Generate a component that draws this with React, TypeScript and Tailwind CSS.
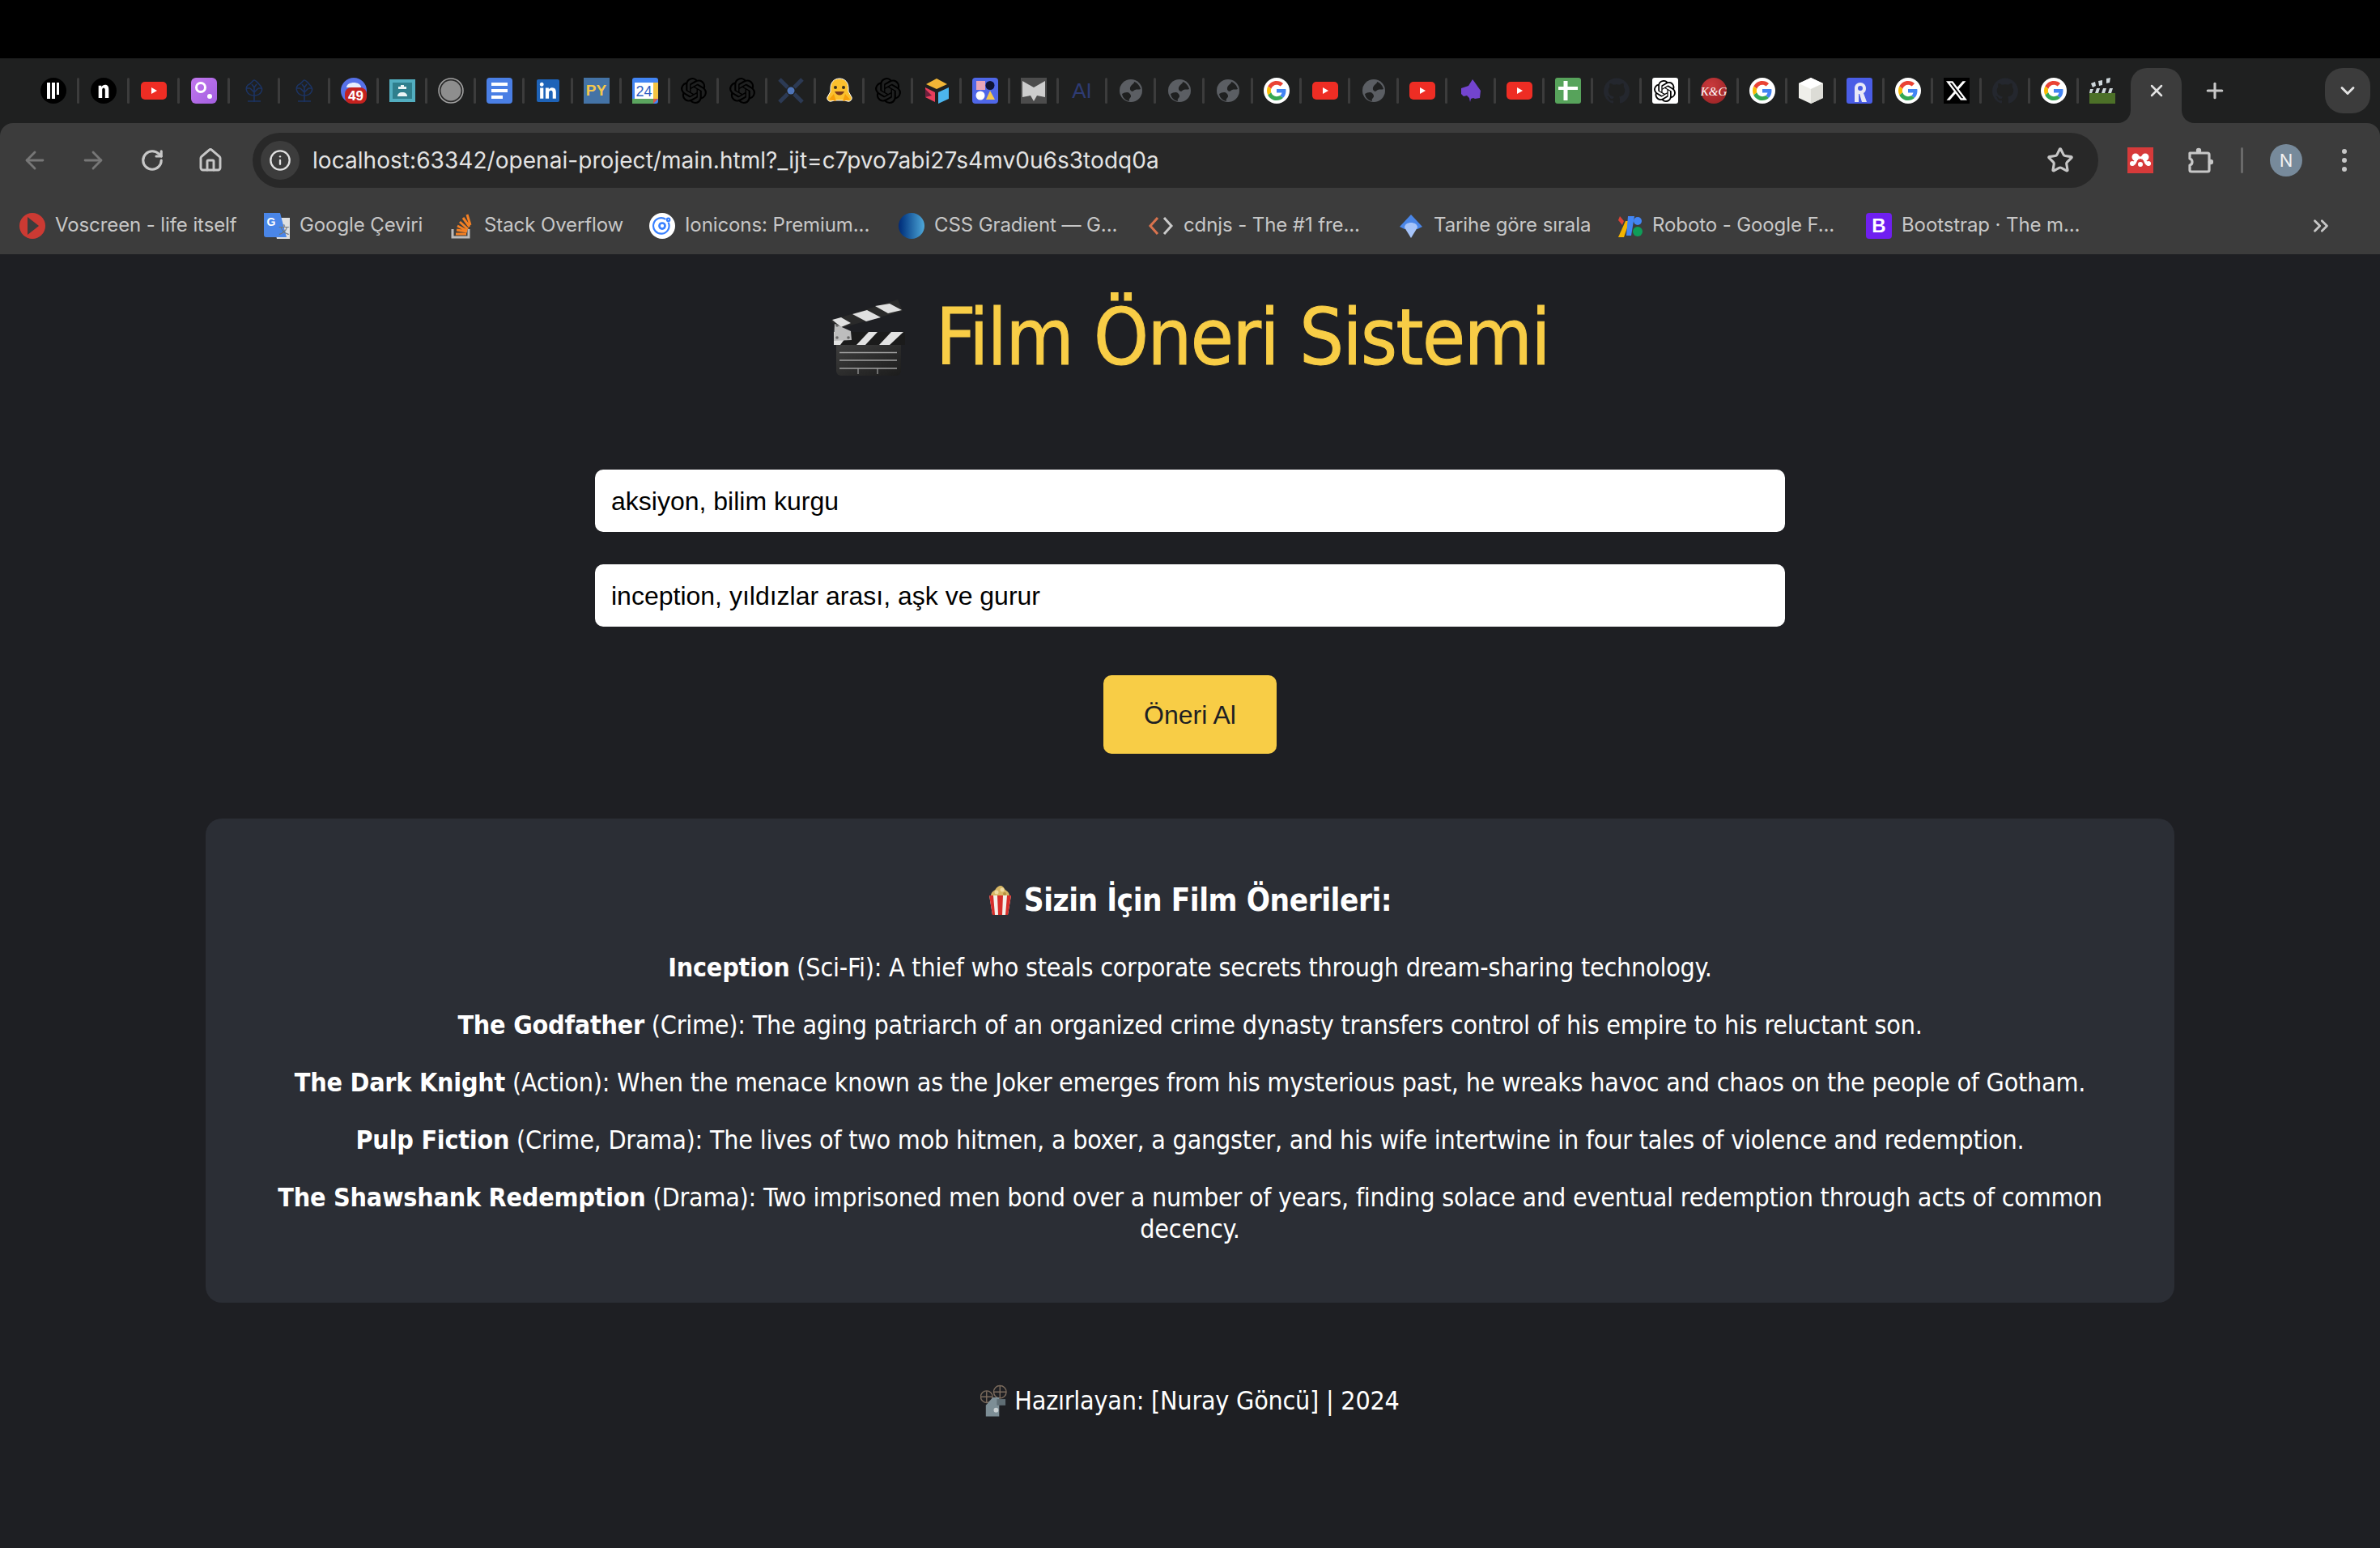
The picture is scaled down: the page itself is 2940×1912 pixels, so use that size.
import type { ReactNode } from 'react'
import { ArrowLeft, ArrowRight, RotateCw, House, Info, Star, X, Plus, ChevronDown, ChevronsRight } from 'lucide-react'
import { SiOpenai, SiGithub, SiLinkedin, SiX } from 'react-icons/si'

const sys = '"Liberation Sans", Arial, sans-serif'

function GoogleG({ size = 20 }: { size?: number }) {
  return (
    <svg viewBox="0 0 48 48" width={size} height={size}>
      <path fill="#EA4335" d="M24 9.5c3.54 0 6.71 1.22 9.21 3.6l6.85-6.85C35.9 2.38 30.47 0 24 0 14.62 0 6.51 5.38 2.56 13.22l7.98 6.19C12.43 13.72 17.74 9.5 24 9.5z" />
      <path fill="#4285F4" d="M46.98 24.55c0-1.57-.15-3.09-.38-4.55H24v9.02h12.94c-.58 2.96-2.26 5.48-4.78 7.18l7.73 6c4.51-4.18 7.09-10.36 7.09-17.65z" />
      <path fill="#FBBC05" d="M10.53 28.59c-.48-1.45-.76-2.99-.76-4.59s.27-3.14.76-4.59l-7.98-6.19C.92 16.46 0 20.12 0 24c0 3.88.92 7.54 2.56 10.78l7.97-6.19z" />
      <path fill="#34A853" d="M24 48c6.48 0 11.93-2.13 15.89-5.81l-7.73-6c-2.15 1.45-4.92 2.3-8.16 2.3-6.26 0-11.57-4.22-13.47-9.91l-7.98 6.19C6.51 42.62 14.62 48 24 48z" />
    </svg>
  )
}

const G = () => (
  <div className="w-8 h-8 rounded-full bg-white flex items-center justify-center">
    <GoogleG size={24} />
  </div>
)

const Yt = () => (
  <svg viewBox="0 0 32 32" width="32" height="32">
    <rect x="0" y="5" width="32" height="22" rx="5" fill="#ee2d24" />
    <path d="M13 12l7 4-7 4z" fill="#fff" />
  </svg>
)

const Globe = () => (
  <svg viewBox="0 0 32 32" width="32" height="32">
    <circle cx="16" cy="16" r="14" fill="#5b5e63" />
    <path d="M5 20c3-2 7-3 9-1s3 4 1 6-1 3-1 4c-5-1-8-4-9-9z" fill="#1f2020" />
    <path d="M20 5c4 1 7 5 8 9-2 1-5 0-7 1s-3 3-5 1-1-5 1-7 3-2 3-4z" fill="#1f2020" />
  </svg>
)

const Tree = () => (
  <svg viewBox="0 0 32 32" width="32" height="32" fill="none" stroke="#1c3362" strokeWidth="1.6">
    <path d="M16 30V12M8 29h16M16 22c-3 0-7-1-9-5s0-8 3-9 4-5 6-5 4 3 6 5 5 5 3 9-6 5-9 5z" />
    <path d="M16 18l-5-5M16 18l5-5M16 12l-3-4M16 12l3-4M7 13h4M25 13h-4" />
  </svg>
)

const Clapboard = () => (
  <svg viewBox="0 0 32 32" width="32" height="32">
    <rect x="0" y="19" width="32" height="13" fill="#4c7028" />
    <rect x="0" y="13" width="32" height="6" fill="#1f2020" />
    <path d="M1 14h4l-2 5H0zM9 13h4l-2 6H7zM17 13h4l-2 6h-4zM25 13h4l-2 6h-4z" fill="#cfd8dc" />
    <path d="M2 7l5-2 1 5-4 2zM11 4l5-1 0 6-4 1zM21 1l5-1-1 6-4 1z" fill="#cfd8dc" />
  </svg>
)

const favicons: ReactNode[] = [
  <div className="w-8 h-8 rounded-full bg-black flex items-center justify-center gap-[2px]">
    <div className="w-[4px] h-[20px] bg-white" />
    <div className="w-[4px] h-[20px] bg-white" />
    <div className="w-[3px] h-[15px] bg-white self-start mt-[6px]" />
  </div>,
  <div className="w-8 h-8 rounded-full bg-black flex items-center justify-center">
    <svg viewBox="0 0 20 24" width="18" height="22"><path d="M3 22V5h4v2c1-2 3-3 5-3 4 0 5 3 5 6v12h-5V11c0-2-1-3-2-3s-2 1-2 3v11z" fill="#fff" /></svg>
  </div>,
  <Yt />,
  <svg viewBox="0 0 32 32" width="32" height="32">
    <defs><linearGradient id="pu" x1="0" y1="0" x2="1" y2="1"><stop offset="0" stopColor="#c177ee" /><stop offset="1" stopColor="#a45fe0" /></linearGradient></defs>
    <rect width="32" height="32" rx="6" fill="url(#pu)" />
    <circle cx="12" cy="12" r="5.500" fill="none" stroke="#fff" strokeWidth="3" />
    <circle cx="23" cy="23" r="3" fill="#fff" />
  </svg>,
  <Tree />,
  <Tree />,
  <svg viewBox="0 0 32 32" width="32" height="32">
    <circle cx="16" cy="16" r="16" fill="#5671e8" />
    <path d="M7 12c0-4 5-6 9-6s9 2 9 6z" fill="#e8edfc" />
    <rect x="5" y="12" width="27" height="20" rx="8" fill="#c5221f" />
    <text x="18.500" y="28" textAnchor="middle" fontSize="17" fontWeight="700" fill="#fff" fontFamily={sys}>49</text>
  </svg>,
  <svg viewBox="0 0 32 32" width="32" height="32">
    <rect y="2" width="32" height="28" fill="#52aec0" />
    <rect x="4" y="6" width="24" height="20" fill="#2f7f8d" />
    <path d="M14 9h4v2h3v3h-10v-3h3z" fill="#eaf4f5" />
    <path d="M10 23c0-3 2-5 6-5s6 2 6 5z" fill="#eaf4f5" />
  </svg>,
  <svg viewBox="0 0 32 32" width="32" height="32">
    <circle cx="16" cy="16" r="15" fill="#2a2a2a" stroke="#a3a3a3" strokeWidth="1.500" />
    <circle cx="16" cy="16" r="12.500" fill="#8e8e8e" />
  </svg>,
  <svg viewBox="0 0 32 32" width="32" height="32">
    <rect width="32" height="32" rx="4" fill="#4a7fe5" />
    <rect x="6" y="6" width="20" height="4" fill="#fff" />
    <rect x="6" y="14" width="20" height="4" fill="#fff" />
    <rect x="6" y="22" width="14" height="4" fill="#fff" />
  </svg>,
  <div className="w-8 h-8 flex items-center justify-center text-[#1e63b8] relative">
    <div className="absolute inset-[4px] bg-white" />
    <SiLinkedin size={28} className="relative" />
  </div>,
  <div className="w-8 h-8 bg-[#4473a6] flex items-center justify-center text-[#f4c84b] text-[19px] font-bold" style={{ fontFamily: sys }}>PY</div>,
  <svg viewBox="0 0 32 32" width="32" height="32">
    <rect width="32" height="32" rx="3" fill="#4285f4" />
    <rect x="3" y="6" width="23" height="20" fill="#fff" />
    <rect x="26" y="6" width="6" height="20" fill="#f4c542" />
    <rect y="26" width="26" height="6" fill="#5ba55f" />
    <path d="M26 32v-6h6z" fill="#d9584a" />
    <text x="14.500" y="23" textAnchor="middle" fontSize="18" fill="#2f5fc4" fontFamily={sys}>24</text>
  </svg>,
  <SiOpenai size={32} className="text-black" />,
  <SiOpenai size={32} className="text-black" />,
  <svg viewBox="0 0 32 32" width="32" height="32">
    <path d="M2 2l10 10M30 2L20 12M2 30l10-10M30 30L20 20" stroke="#2c3a54" strokeWidth="5" />
    <circle cx="16" cy="16" r="4.500" fill="#4e74b8" />
  </svg>,
  <svg viewBox="0 0 32 32" width="32" height="32">
    <path d="M16 1c7 0 11 5 11 12v4l4 7c1 3-2 6-5 5l-4-1H10l-4 1c-3 1-6-2-5-5l4-7v-4C5 6 9 1 16 1z" fill="#fbc02d" stroke="#fff" strokeWidth="1" />
    <circle cx="11" cy="12" r="2" fill="#3a2f1a" />
    <circle cx="21" cy="12" r="2" fill="#3a2f1a" />
    <path d="M10 17c3 6 9 6 12 0z" fill="#7a3b1d" />
    <path d="M3 27l6-7 3 9zM29 27l-6-7-3 9z" fill="#f59e0b" />
  </svg>,
  <SiOpenai size={32} className="text-black" />,
  <svg viewBox="0 0 32 32" width="32" height="32">
    <path d="M16 1l13 7-13 6-13-6z" fill="#f2b636" />
    <path d="M2 12l12 6v12L2 24z" fill="#e83e5c" />
    <path d="M2 14l8 8-8 2z" fill="#6d1f3c" />
    <path d="M18 18l13-6v14l-13 6z" fill="#4cb5ee" />
  </svg>,
  <svg viewBox="0 0 32 32" width="32" height="32">
    <rect width="32" height="32" rx="4" fill="#4f67e8" />
    <rect x="5" y="4" width="11" height="11" fill="#e8a6b9" />
    <circle cx="22" cy="9.500" r="5.500" fill="#0f1333" />
    <circle cx="10" cy="22" r="5.500" fill="#fff" />
    <path d="M22 16l6 11H17z" fill="#f5c84b" />
  </svg>,
  <svg viewBox="0 0 32 32" width="32" height="32">
    <rect width="32" height="32" fill="#4c4c4c" />
    <path d="M2 4l14 8 14-8v20l-10-2-4 7-4-7-10 2z" fill="#cdcdcd" />
  </svg>,
  <div className="w-8 h-8 flex items-center justify-center text-[#2e3b73] text-[26px]" style={{ fontFamily: sys }}>AI</div>,
  <Globe />,
  <Globe />,
  <Globe />,
  <G />,
  <Yt />,
  <Globe />,
  <Yt />,
  <svg viewBox="0 0 32 32" width="32" height="32">
    <path d="M4 13l9-3 5-8 3 4 7 10-1 9-6 1-2-1-3 1-1 4-1-5-3-3-4 1-3-3z" fill="#7344cf" />
  </svg>,
  <Yt />,
  <svg viewBox="0 0 32 32" width="32" height="32">
    <rect width="32" height="32" rx="3" fill="#57a35b" />
    <rect x="10.500" y="4" width="5" height="24" fill="#fff" />
    <rect x="4" y="11" width="24" height="4" fill="#fff" />
  </svg>,
  <SiGithub size={32} className="text-[#24272e]" />,
  <div className="w-8 h-8 rounded-[3px] bg-white flex items-center justify-center">
    <SiOpenai size={27} className="text-black" />
  </div>,
  <svg viewBox="0 0 32 32" width="32" height="32">
    <defs><radialGradient id="kg" cx="0.400" cy="0.300" r="0.800"><stop offset="0" stopColor="#c9393c" /><stop offset="1" stopColor="#9c2426" /></radialGradient></defs>
    <circle cx="16" cy="16" r="16" fill="url(#kg)" />
    <text x="16" y="22" textAnchor="middle" fontSize="15" fontStyle="italic" fill="#fff" fontFamily='"Liberation Serif", serif'>K&amp;G</text>
  </svg>,
  <G />,
  <svg viewBox="0 0 32 32" width="32" height="32">
    <path d="M16 0l15 7v18l-15 7-15-7V7z" fill="#efefea" />
    <path d="M16 14l15-7-15-7L1 7z" fill="#fff" />
    <path d="M31 7v18l-15 7V14z" fill="#dcdcd6" />
  </svg>,
  <svg viewBox="0 0 32 32" width="32" height="32">
    <rect width="32" height="32" rx="3" fill="#4a5de6" />
    <path d="M10 30V13c0-4 3-7 7-7s7 3 7 7c0 3-1 5-3 6l4 11h-6l-3-10h-1v10z" fill="#e8e9f7" />
    <circle cx="17" cy="13" r="3" fill="#4a5de6" />
  </svg>,
  <G />,
  <div className="w-8 h-8 bg-black flex items-center justify-center text-white">
    <SiX size={26} />
  </div>,
  <SiGithub size={32} className="text-[#24272e]" />,
  <G />,
  <Clapboard />,
]

const bookmarks: { icon: ReactNode; label: string; width: string }[] = [
  {
    label: 'Voscreen - life itself',
    width: 'w-[302px]',
    icon: (
      <svg viewBox="0 0 32 32" width="32" height="32">
        <circle cx="16" cy="16" r="16" fill="#cc3a33" />
        <path d="M10 5l14 11-14 11z" fill="#3c3c3c" />
      </svg>
    ),
  },
  {
    label: 'Google Çeviri',
    width: 'w-[228px]',
    icon: (
      <svg viewBox="0 0 32 32" width="32" height="32">
        <path d="M10 6h22v26H16z" fill="#e0e0e0" />
        <path d="M0 0h20l8 30H3a3 3 0 0 1-3-3z" fill="#4a86e8" />
        <text x="9" y="16" textAnchor="middle" fontSize="14" fontWeight="700" fill="#fff" fontFamily={sys}>G</text>
        <text x="25" y="25" textAnchor="middle" fontSize="13" fill="#777" fontFamily='"Noto Sans CJK SC", sans-serif'>文</text>
      </svg>
    ),
  },
  {
    label: 'Stack Overflow',
    width: 'w-[248px]',
    icon: (
      <svg viewBox="0 0 32 32" width="32" height="32" fill="none" strokeWidth="3">
        <path d="M5 20v10h20V20" stroke="#bcbbbb" />
        <path d="M9 26h13M10 21l13 2M11 16l12 6M14 11l10 9M18 6l8 11M23 2l4 13" stroke="#f48024" />
      </svg>
    ),
  },
  {
    label: 'Ionicons: Premium...',
    width: 'w-[308px]',
    icon: (
      <div className="w-8 h-8 rounded-full bg-white flex items-center justify-center">
        <svg viewBox="0 0 24 24" width="26" height="26" fill="none" stroke="#3880ff" strokeWidth="2">
          <path d="M19 8a9 9 0 1 1-3-3.500" />
          <circle cx="12" cy="12" r="4.500" fill="#3880ff" stroke="none" />
          <circle cx="12" cy="12" r="2" fill="#fff" stroke="none" />
          <circle cx="19" cy="5" r="1.600" />
        </svg>
      </div>
    ),
  },
  {
    label: 'CSS Gradient — G...',
    width: 'w-[308px]',
    icon: <div className="w-8 h-8 rounded-full bg-gradient-to-r from-[#022a78] to-[#4fa8d8]" />,
  },
  {
    label: 'cdnjs - The #1 fre...',
    width: 'w-[309px]',
    icon: (
      <svg viewBox="0 0 32 32" width="32" height="32" fill="none" strokeWidth="3">
        <path d="M12 6L3 16l9 10" stroke="#d9734e" />
        <path d="M20 6l9 10-9 10" stroke="#c9c9c9" />
      </svg>
    ),
  },
  {
    label: 'Tarihe göre sırala',
    width: 'w-[270px]',
    icon: (
      <svg viewBox="0 0 32 32" width="32" height="32">
        <path d="M16 2l14 15-6 3H8l-6-3z" fill="#4a86e8" />
        <path d="M8 18c0-4 4-6 8-6s8 2 8 6l-8 13z" fill="#a6c4fa" />
      </svg>
    ),
  },
  {
    label: 'Roboto - Google F...',
    width: 'w-[308px]',
    icon: (
      <svg viewBox="0 0 32 32" width="32" height="32">
        <path d="M2 30l9-20 5 0-7 20z" fill="#f4b400" />
        <path d="M4 4l5 6-2 5-5-6z" fill="#db4437" />
        <path d="M14 4h8l-4 24h-6z" fill="#4285f4" />
        <circle cx="26" cy="10" r="5" fill="#4285f4" />
        <circle cx="26" cy="23" r="6" fill="#0f9d58" />
      </svg>
    ),
  },
  {
    label: 'Bootstrap · The m...',
    width: 'w-[270px]',
    icon: (
      <div className="w-8 h-8 rounded-[4px] bg-[#6f1ff0] flex items-center justify-center text-white text-[24px] font-bold" style={{ fontFamily: sys }}>
        B
      </div>
    ),
  },
]

const recommendations = [
  { title: 'Inception', rest: ' (Sci-Fi): A thief who steals corporate secrets through dream-sharing technology.' },
  { title: 'The Godfather', rest: ' (Crime): The aging patriarch of an organized crime dynasty transfers control of his empire to his reluctant son.' },
  { title: 'The Dark Knight', rest: ' (Action): When the menace known as the Joker emerges from his mysterious past, he wreaks havoc and chaos on the people of Gotham.' },
  { title: 'Pulp Fiction', rest: ' (Crime, Drama): The lives of two mob hitmen, a boxer, a gangster, and his wife intertwine in four tales of violence and redemption.' },
  { title: 'The Shawshank Redemption', rest: ' (Drama): Two imprisoned men bond over a number of years, finding solace and eventual redemption through acts of common decency.' },
]

function ClapperEmoji() {
  return (
    <svg viewBox="10 7 93 95" width="93" height="95">
      <defs>
        <linearGradient id="cb" x1="0" y1="0" x2="1" y2="1">
          <stop offset="0" stopColor="#3e3e3e" />
          <stop offset="1" stopColor="#1c1c1c" />
        </linearGradient>
      </defs>
      <path d="M17 62h80v33a6 6 0 0 1-6 6H23a6 6 0 0 1-6-6z" fill="url(#cb)" />
      <path d="M21 72.500h71M21 82h71M21 92h71" stroke="#a0a0a0" strokeWidth="1.500" />
      <path d="M44 92v7M68 92v7" stroke="#a0a0a0" strokeWidth="1.200" />
      <path d="M14 47h88v16H14z" fill="#1b1b1b" />
      <path d="M14 47h20l-12 16h-8zM42 63l15-16h11L53 63zM70 63l15-16h15L83 63z" fill="#e2e2e2" />
      <path d="M10 33L93 7l6 14-79 22z" fill="#2a2a2a" />
      <path d="M12 32l11-3 12 7-12 5zM37 25l18-5 17 9-18 5zM65 15l18-3 15 8-17 4z" fill="#e0e0e0" />
      <path d="M15 37l20 9 1 11-22 1z" fill="#bdbdbd" />
      <circle cx="18" cy="39" r="1.800" fill="#666" />
      <circle cx="18" cy="54" r="1.800" fill="#666" />
      <circle cx="32" cy="54" r="1.800" fill="#666" />
    </svg>
  )
}

function PopcornEmoji() {
  return (
    <svg viewBox="0 0 29 36" width="29" height="36">
      <path d="M3 13C3 7 8 6 9 4s4-4 6-4 4 2 5 4 6 3 6 9z" fill="#d8b765" />
      <circle cx="10" cy="8" r="2.500" fill="#f0dba0" />
      <circle cx="17" cy="5" r="2.500" fill="#f0dba0" />
      <circle cx="20" cy="10" r="2" fill="#b98f40" />
      <path d="M1 12h27l-4 24H5z" fill="#f4f0ea" />
      <path d="M1 12h5l2 24H5zM11 12h7l-1 24h-5zM23 12h5l-4 24h-3z" fill="#d62e2a" />
    </svg>
  )
}

function ProjectorEmoji() {
  return (
    <svg viewBox="0 0 34 40" width="33" height="40">
      <g fill="none" stroke="#7a6a5c" strokeWidth="1.500">
        <circle cx="8" cy="15" r="7.500" />
        <circle cx="25" cy="9" r="8" />
        <path d="M8 8l0 14M1 15h14M25 1v16M17 9h16" />
      </g>
      <path d="M7 40V26l9-10h8v24z" fill="#7d8e96" />
      <rect x="21" y="18" width="11" height="8" fill="#5f6d74" />
      <circle cx="20" cy="32" r="3" fill="#c9d0d3" />
    </svg>
  )
}

export default function App() {
  return (
    <div className="w-[2940px] h-[1912px] bg-[#1e1f23] flex flex-col overflow-hidden" style={{ fontFamily: '"Inter", sans-serif' }}>
      <div className="h-[72px] bg-black shrink-0" />

      {/* Tab strip */}
      <div className="h-[80px] bg-[#1f2020] flex items-center pl-[36px] pr-[12px] shrink-0">
        {favicons.map((icon, i) => (
          <div key={i} className="flex items-center">
            <div className={`${i < 6 ? 'w-[59px]' : 'w-[57px]'} flex items-center justify-center`}>{icon}</div>
            {i < favicons.length - 1 && <div className="w-[3px] h-[32px] rounded-full bg-[#3c3c3c]" />}
          </div>
        ))}
        <div className="relative self-end ml-[7px] w-[63px] h-[68px] bg-[#3c3c3c] rounded-t-[20px] flex items-center justify-center pb-[12px] text-[#e3e3e3]">
          <X size={24} strokeWidth={2.500} />
          <svg viewBox="0 0 16 16" width="16" height="16" className="absolute bottom-0 -left-[16px]">
            <path d="M16 0v16H0c9 0 16-7 16-16z" fill="#3c3c3c" />
          </svg>
          <svg viewBox="0 0 16 16" width="16" height="16" className="absolute bottom-0 -right-[16px]">
            <path d="M0 0v16h16C7 16 0 9 0 0z" fill="#3c3c3c" />
          </svg>
        </div>
        <div className="ml-[20px] w-[42px] flex justify-center text-[#c7c7c7]">
          <Plus size={30} strokeWidth={2.500} />
        </div>
        <div className="ml-auto w-[56px] h-[56px] rounded-[22px] bg-[#3c3c3c] flex items-center justify-center text-[#e3e3e3]">
          <ChevronDown size={28} strokeWidth={2.500} />
        </div>
      </div>

      {/* Toolbar */}
      <div className="bg-[#1f2020] shrink-0">
        <div className="bg-[#3c3c3c] rounded-t-[16px] h-[92px] flex items-center pl-[24px] pr-[24px]">
          <div className="w-[38px] flex justify-center text-[#777777]">
            <ArrowLeft size={34} strokeWidth={2} />
          </div>
          <div className="w-[38px] ml-[34px] flex justify-center text-[#777777]">
            <ArrowRight size={34} strokeWidth={2} />
          </div>
          <div className="w-[38px] ml-[35px] flex justify-center text-[#c7c7c7]">
            <RotateCw size={30} strokeWidth={2.500} />
          </div>
          <div className="w-[38px] ml-[34px] flex justify-center text-[#c7c7c7]">
            <House size={32} strokeWidth={2.200} />
          </div>
          <div className="ml-[33px] w-[2280px] h-[68px] rounded-full bg-[#282828] flex items-center pl-[10px] pr-[30px] shrink-0">
            <div className="w-[48px] h-[48px] rounded-full bg-[#3c3c3c] flex items-center justify-center text-[#e3e3e3]">
              <Info size={28} strokeWidth={2} />
            </div>
            <div className="ml-[16px] text-[28px] text-[#e3e3e3] tracking-[0.05px]">localhost:63342/openai-project/main.html?_ijt=c7pvo7abi27s4mv0u6s3todq0a</div>
            <Star size={34} strokeWidth={2.200} className="ml-auto text-[#c7c7c7]" />
          </div>
          <div className="ml-[36px] w-[32px] h-[32px] bg-[#d63a3a] shrink-0">
            <svg viewBox="0 0 32 32" width="32" height="32">
              <path d="M5 21c3 0 4-1 5-4s1-5 3-5 2 2 3 2 1-2 3-2 2 2 3 5 2 4 5 4" fill="none" stroke="#fff" strokeWidth="3.500" />
              <circle cx="10" cy="12" r="4.500" fill="#fff" />
              <circle cx="22" cy="12" r="4.500" fill="#fff" />
              <circle cx="6" cy="20" r="3" fill="#fff" />
              <circle cx="26" cy="20" r="3" fill="#fff" />
              <circle cx="16" cy="21" r="3" fill="#fff" />
              <circle cx="16" cy="16" r="2" fill="#d63a3a" />
            </svg>
          </div>
          <div className="ml-[42px] w-[32px] shrink-0">
            <svg viewBox="0 0 32 32" width="32" height="32">
              <path d="M3 7h22a2 2 0 0 1 2 2v19a2 2 0 0 1-2 2H5a2 2 0 0 1-2-2v-6c4-1 4-7 0-8z" fill="none" stroke="#c7c7c7" strokeWidth="3.200" strokeLinejoin="round" />
              <circle cx="14" cy="4" r="3.200" fill="#c7c7c7" />
              <circle cx="29" cy="18" r="3.200" fill="#c7c7c7" />
            </svg>
          </div>
          <div className="ml-[34px] w-[3px] h-[32px] rounded-full bg-[#6a6a6a] shrink-0" />
          <div className="ml-[33px] w-[40px] h-[40px] rounded-full bg-[#778a9b] flex items-center justify-center text-[22px] text-[#f0f0f0] shrink-0">N</div>
          <div className="ml-[49px] flex flex-col gap-[5px] shrink-0">
            <div className="w-[6px] h-[6px] rounded-full bg-[#c7c7c7]" />
            <div className="w-[6px] h-[6px] rounded-full bg-[#c7c7c7]" />
            <div className="w-[6px] h-[6px] rounded-full bg-[#c7c7c7]" />
          </div>
        </div>
      </div>

      {/* Bookmarks */}
      <div className="h-[70px] bg-[#3c3c3c] flex items-center pl-[24px] pr-[58px] shrink-0">
        {bookmarks.map((b) => (
          <div key={b.label} className={`${b.width} flex items-center gap-[12px] shrink-0`}>
            <div className="w-8 h-8 flex items-center justify-center">{b.icon}</div>
            <span className="text-[24px] text-[#c7c7c7] whitespace-nowrap tracking-[-0.1px] -translate-y-[1px]">{b.label}</span>
          </div>
        ))}
        <ChevronsRight size={30} strokeWidth={2.200} className="ml-auto text-[#c7c7c7]" />
      </div>

      {/* Page */}
      <main className="flex flex-col items-center [font-stretch:condensed] tracking-[-0.015em] text-white" style={{ fontFamily: '"DejaVu Sans", sans-serif' }}>
        <div className="mt-[45px] flex items-center gap-[37px]">
          <ClapperEmoji />
          <h1 className="text-[96px] leading-[116px] tracking-[-1.45px] text-[#f8cd46] [-webkit-text-stroke:1px_#f8cd46]">Film Öneri Sistemi</h1>
        </div>

        <div className="mt-[105px] w-[1470px] flex flex-col gap-[40px] tracking-normal" style={{ fontFamily: sys }}>
          <div className="h-[77px] rounded-[10px] bg-white flex items-center px-[20px] text-[32px] text-black">aksiyon, bilim kurgu</div>
          <div className="h-[77px] rounded-[10px] bg-white flex items-center px-[20px] text-[32px] text-black">inception, yıldızlar arası, aşk ve gurur</div>
        </div>

        <button className="mt-[60px] w-[214px] h-[97px] rounded-[10px] bg-[#f8cd46] text-[32px] tracking-normal text-[#1e1f23]" style={{ fontFamily: sys }}>
          Öneri Al
        </button>

        <section className="mt-[80px] w-[2432px] h-[598px] rounded-[20px] bg-[#2b2e35] px-[60px] pt-[77px] text-center">
          <h2 className="flex items-center justify-center gap-[15px] text-[38.4px] leading-[48px] font-bold tracking-[-0.012em]">
            <PopcornEmoji />
            Sizin İçin Film Önerileri:
          </h2>
          <div className="mt-[40px] flex flex-col gap-[32px] text-[32px] leading-[39px]">
            {recommendations.map((r) => (
              <p key={r.title}>
                <strong>{r.title}</strong>
                {r.rest}
              </p>
            ))}
          </div>
        </section>

        <footer className="mt-[101px] flex items-center gap-[9px] text-[32px] leading-[40px]">
          <ProjectorEmoji />
          Hazırlayan: [Nuray Göncü] | 2024
        </footer>
      </main>
    </div>
  )
}
